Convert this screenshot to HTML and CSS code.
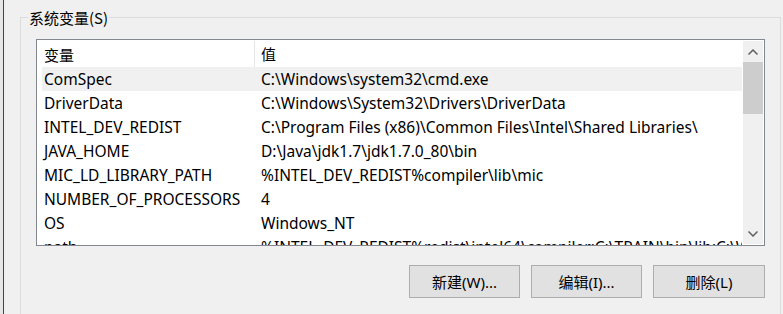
FILE: index.html
```html
<!DOCTYPE html>
<html lang="zh-CN">
<head>
<meta charset="utf-8">
<title>系统变量</title>
<link rel="stylesheet" href="styles.css">
</head>
<body>
<div class="edge"></div>
<div class="group">
  <div class="legend">系统变量(S)</div>
  <div class="list">
    <div class="rows">
      <div class="head">
        <div class="c1 cjk">变量</div>
        <div class="c2 cjk">值</div>
      </div>
      <div class="row sel"><div class="c1">ComSpec</div><div class="c2">C:\Windows\system32\cmd.exe</div></div>
      <div class="row"><div class="c1">DriverData</div><div class="c2">C:\Windows\System32\Drivers\DriverData</div></div>
      <div class="row"><div class="c1">INTEL_DEV_REDIST</div><div class="c2">C:\Program Files (x86)\Common Files\Intel\Shared Libraries\</div></div>
      <div class="row"><div class="c1">JAVA_HOME</div><div class="c2">D:\Java\jdk1.7\jdk1.7.0_80\bin</div></div>
      <div class="row"><div class="c1">MIC_LD_LIBRARY_PATH</div><div class="c2">%INTEL_DEV_REDIST%compiler\lib\mic</div></div>
      <div class="row"><div class="c1">NUMBER_OF_PROCESSORS</div><div class="c2">4</div></div>
      <div class="row"><div class="c1">OS</div><div class="c2">Windows_NT</div></div>
      <div class="row"><div class="c1">path</div><div class="c2">%INTEL_DEV_REDIST%redist\intel64\compiler;C:\TRAIN\bin\lib;C:\Windows</div></div>
    </div>
    <div class="scroll">
      <div class="arrow">
        <svg width="10" height="6" viewBox="0 0 10 6"><path d="M0.5 5.5 L5 1 L9.5 5.5" fill="none" stroke="#606060" stroke-width="1.5"/></svg>
      </div>
      <div class="thumb"></div>
      <div class="track"></div>
      <div class="arrow">
        <svg width="10" height="6" viewBox="0 0 10 6"><path d="M0.5 0.5 L5 5 L9.5 0.5" fill="none" stroke="#606060" stroke-width="1.5"/></svg>
      </div>
    </div>
  </div>
  <div class="buttons">
    <button class="btn">新建(W)...</button>
    <button class="btn">编辑(I)...</button>
    <button class="btn">删除(L)</button>
  </div>
</div>
</body>
</html>
```
FILE: styles.css
```css
html, body {
  margin: 0;
  padding: 0;
  height: 314px;
  overflow: hidden;
}
body {
  display: flex;
  align-items: flex-start;
  background: #f0f0f0;
  font-family: "Noto Sans", "Noto Sans CJK SC", sans-serif;
  color: #000;
}
.edge {
  width: 3px;
  height: 314px;
  background: #e6e6e6;
  border-right: 1px solid #3c4650;
  flex: none;
}
.group {
  position: relative;
  margin: 17px 2px 0 16px;
  border: 1px solid #dcdcdc;
  border-bottom: none;
  padding: 21px 15px 16px 15px;
  width: 729px;
  flex: none;
}
.legend {
  position: absolute;
  top: -10px;
  left: 7px;
  padding: 0 1px;
  background: #f0f0f0;
  font-family: "Noto Sans CJK SC", sans-serif;
  font-size: 15px;
  line-height: 20px;
}
.list {
  display: flex;
  height: 205px;
  border: 1px solid #828790;
  background: #fff;
}
.rows {
  flex: 1;
  padding-left: 5px;
  overflow: hidden;
  min-width: 0;
}
.head {
  display: flex;
  height: 27px;
  align-items: center;
  font-family: "Noto Sans CJK SC", sans-serif;
  font-size: 15px;
}
.head .c1 {
  height: 26px;
  align-self: flex-end;
  display: flex;
  align-items: center;
  border-right: 1px solid #e5e5e5;
  box-sizing: border-box;
  width: 213px;
}
.row {
  display: flex;
  height: 24px;
  line-height: 24px;
  font-size: 15.5px;
  white-space: nowrap;
}
.row.sel {
  background: #f0f0f0;
}
.c1 {
  width: 213px;
  padding-left: 2px;
  box-sizing: border-box;
  flex: none;
}
.c2 {
  padding-left: 6px;
}
.scroll {
  width: 20px;
  margin: 1px 1px 1px 1px;
  background: #f0f0f0;
  display: flex;
  flex-direction: column;
  flex: none;
}
.arrow {
  height: 21px;
  display: flex;
  align-items: center;
  justify-content: center;
}
.thumb {
  height: 52px;
  background: #cdcdcd;
}
.track {
  flex: 1;
}
.buttons {
  display: flex;
  justify-content: flex-end;
  gap: 11px;
  margin-top: 19px;
}
.btn {
  width: 111px;
  height: 33px;
  background: #e1e1e1;
  border: 1px solid #adadad;
  border-radius: 0;
  font-family: "Noto Sans", "Noto Sans CJK SC", sans-serif;
  font-size: 15px;
  color: #000;
  padding: 0;
}
.btn:last-child {
  width: 112px;
}
```
